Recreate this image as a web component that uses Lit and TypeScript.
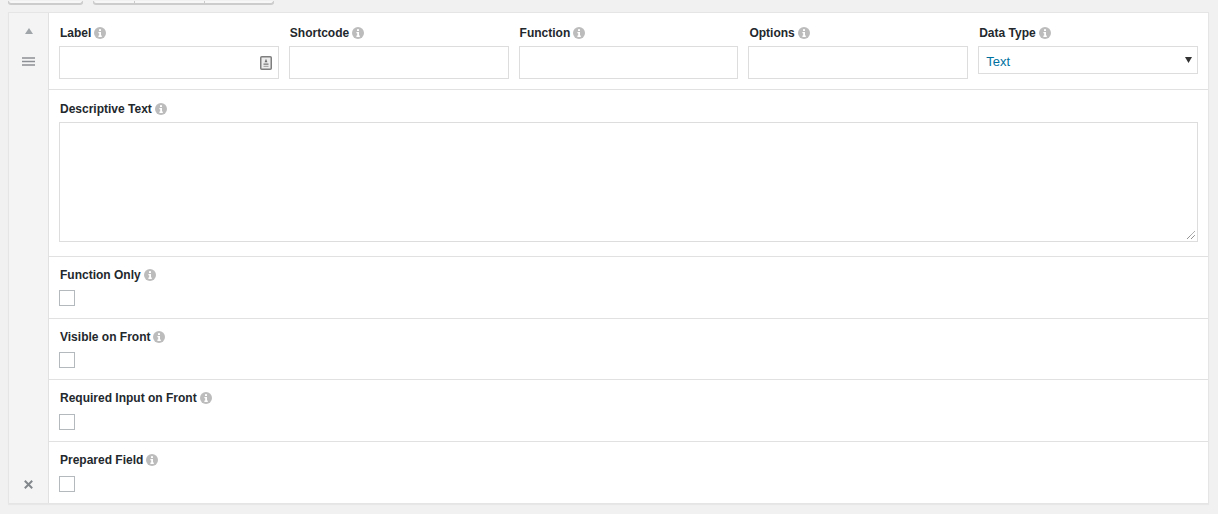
import { LitElement, html, css } from "lit";
import { customElement } from "lit/decorators.js";

const info = html`<svg class="info" viewBox="0 0 12 12" width="12" height="12" aria-hidden="true">
  <circle cx="6" cy="6" r="6" fill="#bcbcbc"></circle>
  <rect x="5" y="2.2" width="2" height="1.8" fill="#fff"></rect>
  <path d="M4.4 5h2.6v3.6h.8V10H4.4V8.6h.8V6.2h-.8z" fill="#fff"></path>
</svg>`;

const lab = (t: string) => html`<div class="label"><span>${t}</span>${info}</div>`;

@customElement("app-root")
export class AppRoot extends LitElement {
  static styles = css`
    :host { display: block; background: #f1f1f1; height: 514px; overflow: hidden; font-family: "Liberation Sans", Arial, sans-serif; font-size: 12px; color: #23282d; }
    .toolbar { display: flex; height: 4px; margin: 0 8px 8px; gap: 10px; align-items: flex-end; }
    .btn { border: 1px solid #ccc; border-top: 0; border-radius: 0 0 3px 3px; background: #f7f7f7; box-shadow: 0 1px 0 #ccc; box-sizing: border-box; height: 3px; }
    .btn.one { width: 75px; }
    .group { display: flex; }
    .group .btn { border-radius: 0; border-left: 0; }
    .group .btn:first-child { width: 42px; border-left: 1px solid #ccc; border-radius: 0 0 0 3px; }
    .group .btn:nth-child(2) { width: 70px; }
    .group .btn:nth-child(3) { width: 69px; border-radius: 0 0 3px 0; }
    .card { display: flex; margin: 0 9px 0 8px; height: 492px; box-sizing: border-box; background: #fff; border: 1px solid #e5e5e5; box-shadow: 0 1px 1px rgba(0,0,0,.04); }
    .side { width: 40px; flex: none; background: #f4f4f4; border-right: 1px solid #e1e1e1; display: flex; flex-direction: column; align-items: center; padding: 15px 0 14px; box-sizing: border-box; }
    .side svg { display: block; }
    .menu { margin-top: 23px; }
    .close { margin-top: auto; }
    .main { flex: 1; min-width: 0; display: flex; flex-direction: column; }
    .row { box-sizing: border-box; padding: 11px 10px 0; border-bottom: 1px solid #e1e1e1; }
    .row:last-child { border-bottom: 0; }
    .r1 { height: 77px; padding-top: 13px; }
    .r2 { height: 167px; padding-top: 12px; }
    .r3 { height: 62px; } .r4 { height: 61px; } .r5 { height: 62px; } .r6 { height: 61px; }
    .cols { display: grid; grid-template-columns: repeat(5, 1fr); gap: 10px; }
    .label { display: flex; align-items: center; gap: 3px; height: 14px; font-weight: 700; font-size: 12px; line-height: 14px; color: #23282d; padding-left: 1px; margin-bottom: 8px; }
    .r1 .label, .r2 .label { margin-bottom: 6px; }
    .r5 .label, .r6 .label { margin-bottom: 9px; }
    .info { flex: none; }
    .field { position: relative; height: 33px; box-sizing: border-box; border: 1px solid #ddd; background: #fff; }
    .field svg { position: absolute; right: 6px; top: 9px; }
    .select { height: 28px; box-sizing: border-box; border: 1px solid #ddd; background: #fff; display: flex; align-items: center; justify-content: space-between; padding: 2px 5px 0 7px; font-size: 13px; color: #00719f; }
    .select svg { margin-top: -3px; }
    .textarea { position: relative; height: 120px; box-sizing: border-box; border: 1px solid #ddd; background: #fff; }
    .grip { position: absolute; right: 1px; bottom: 1px; }
    .check { width: 16px; height: 16px; box-sizing: border-box; border: 1px solid #b4b9be; background: #fff; }
  `;

  render() {
    return html`
      <div class="toolbar">
        <div class="btn one"></div>
        <div class="group"><div class="btn"></div><div class="btn"></div><div class="btn"></div></div>
      </div>
      <div class="card">
        <div class="side">
          <svg width="8" height="6" viewBox="0 0 8 6"><path d="M4 0l4 6H0z" fill="#a0a5aa"></path></svg>
          <svg class="menu" width="13" height="9" viewBox="0 0 13 9"><path d="M0 1h13M0 4.5h13M0 8h13" stroke="#8c8f94" stroke-width="1.3"></path></svg>
          <svg class="close" width="9" height="9" viewBox="0 0 9 9"><path d="M.8.8l7.4 7.4M8.2.8L.8 8.2" stroke="#82878c" stroke-width="2"></path></svg>
        </div>
        <div class="main">
          <div class="row r1">
            <div class="cols">
              <div>${lab("Label")}<div class="field">
                <svg width="12" height="14" viewBox="0 0 12 14"><rect x=".75" y=".75" width="10.5" height="12.5" rx="1" fill="#ececec" stroke="#7e7e7e" stroke-width="1.5"></rect><path d="M6 2.8l1.4 3.4H4.6z" fill="#6e6e6e"></path><rect x="3.5" y="7.4" width="5" height="1.5" fill="#8a8a8a"></rect><rect x="3.5" y="9.8" width="5" height="1.2" fill="#aaa"></rect></svg>
              </div></div>
              <div>${lab("Shortcode")}<div class="field"></div></div>
              <div>${lab("Function")}<div class="field"></div></div>
              <div>${lab("Options")}<div class="field"></div></div>
              <div>${lab("Data Type")}<div class="select"><span>Text</span><svg width="7" height="6" viewBox="0 0 7 6"><path d="M0 0h7L3.5 6z" fill="#333"></path></svg></div></div>
            </div>
          </div>
          <div class="row r2">${lab("Descriptive Text")}
            <div class="textarea"><svg class="grip" width="10" height="10" viewBox="0 0 10 10"><path d="M1 9l8-8M5 9l4-4" stroke="#666" stroke-width="1" stroke-dasharray="1 .6"></path></svg></div>
          </div>
          <div class="row r3">${lab("Function Only")}<div class="check"></div></div>
          <div class="row r4">${lab("Visible on Front")}<div class="check"></div></div>
          <div class="row r5">${lab("Required Input on Front")}<div class="check"></div></div>
          <div class="row r6">${lab("Prepared Field")}<div class="check"></div></div>
        </div>
      </div>
    `;
  }
}
